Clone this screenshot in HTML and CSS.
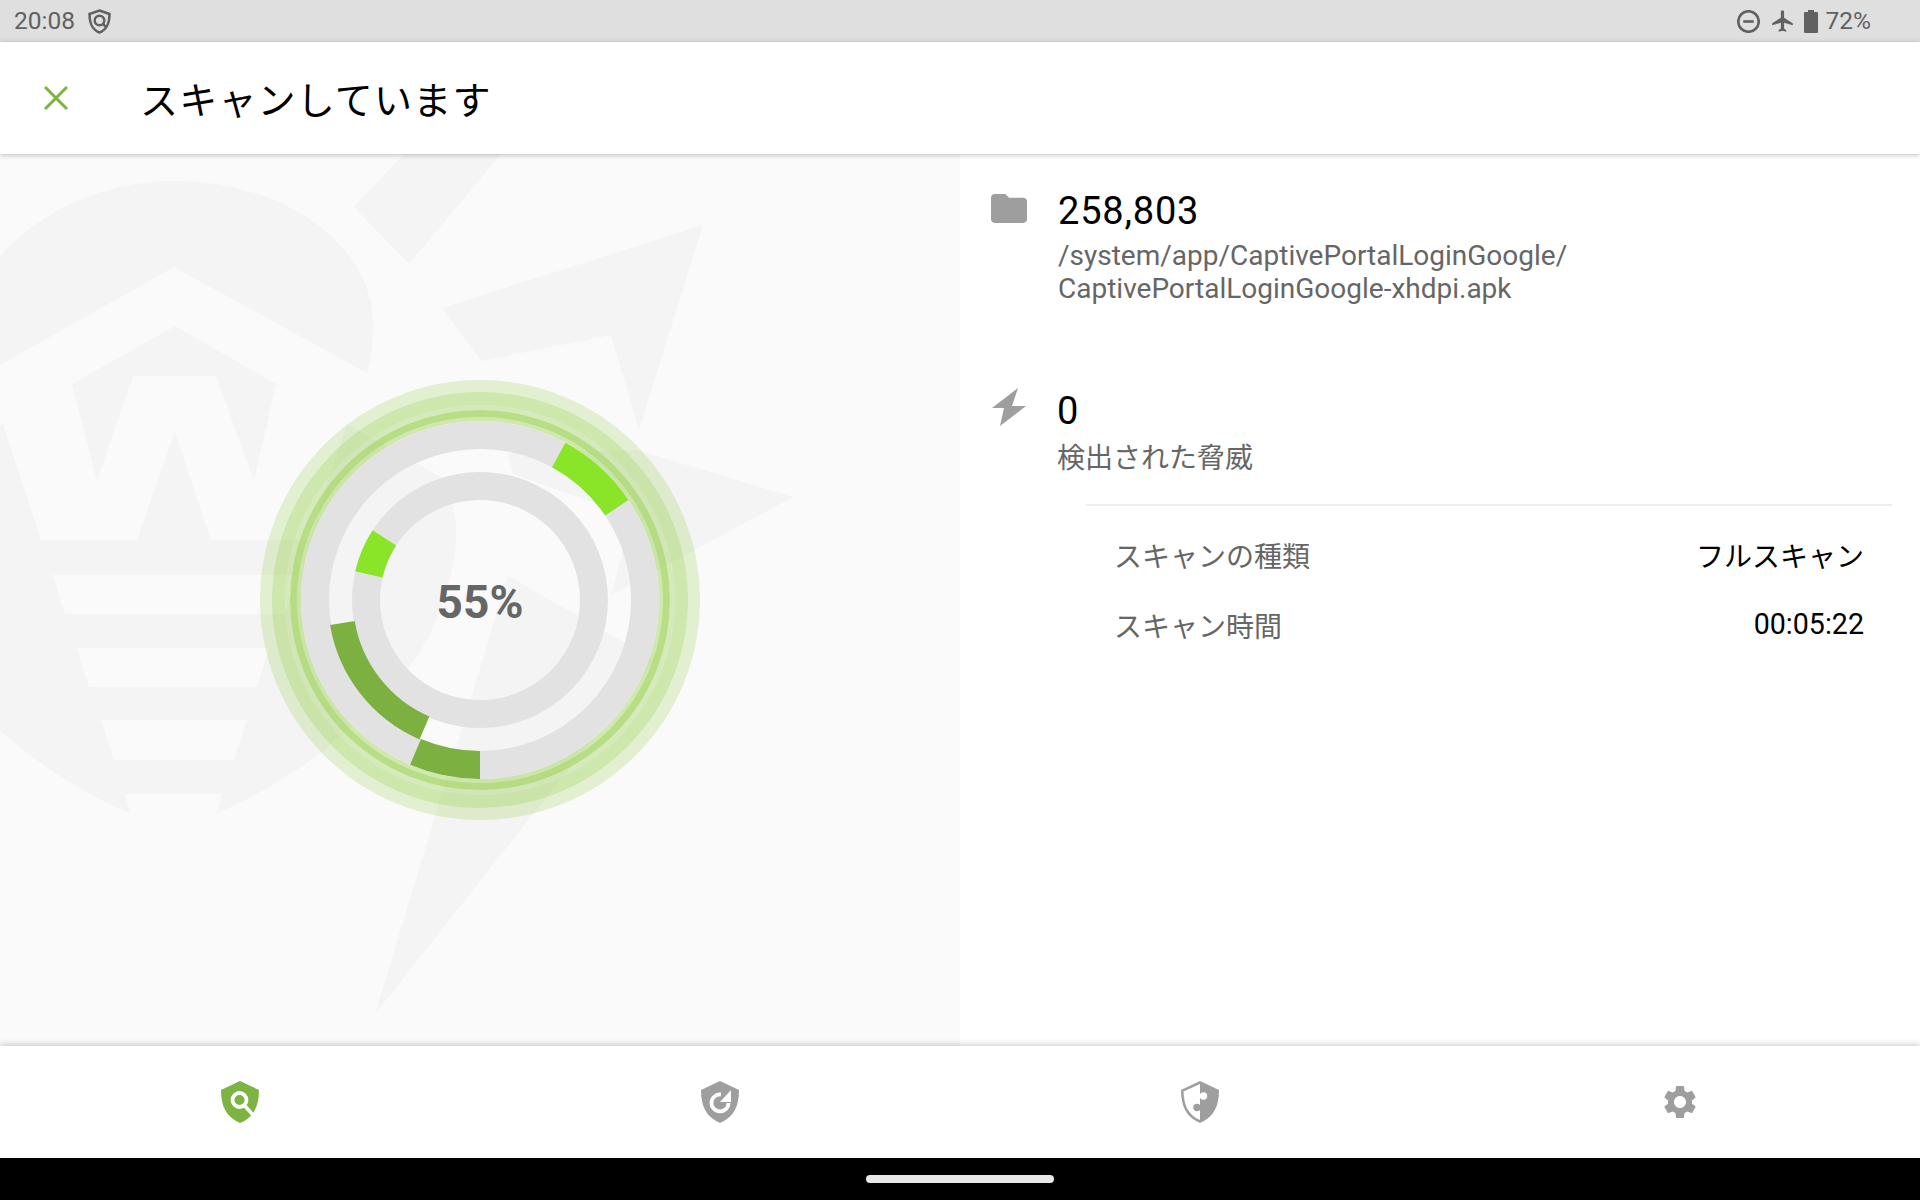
FILE: index.html
```html
<!DOCTYPE html>
<html lang="ja">
<head>
<meta charset="utf-8">
<title>スキャンしています</title>
<link rel="stylesheet" href="styles.css">
</head>
<body>
<div class="screen">
  <header class="status">
    <div class="status-side">
      <span class="status-text">20:08</span>
      <svg class="st-shield" viewBox="0 0 23 25"><path class="st-line" d="M11.5 1.5 21.5 5c0 8-1.500 15-10 18.500C3 20 1.500 13 1.500 5Z"/><circle class="st-line" cx="11.500" cy="11.500" r="4.800"/><path class="st-line" d="M15 15l3 3"/></svg>
    </div>
    <div class="status-side">
      <svg class="st-dnd" viewBox="0 0 22 22"><circle class="st-line" cx="11" cy="11" r="9.800"/><path class="st-line" d="M6 11h10"/></svg>
      <svg class="st-plane" viewBox="0 0 24 24"><path class="st-fill" d="M21 16v-2l-8-5V3.500c0-.83-.67-1.500-1.500-1.500S10 2.670 10 3.500V9l-8 5v2l8-2.500V19l-2 1.500V22l3.500-1 3.500 1v-1.500L13 19v-5.500l8 2.500z"/></svg>
      <svg class="st-batt" viewBox="0 0 14 23"><path class="st-fill" d="M4 0h6v2h3a1 1 0 0 1 1 1v19a1 1 0 0 1-1 1H1a1 1 0 0 1-1-1V3a1 1 0 0 1 1-1h3Z"/></svg>
      <span class="status-text">72%</span>
    </div>
  </header>

  <div class="appbar">
    <svg class="close" viewBox="0 0 24 24"><path d="M1 1 23 23M23 1 1 23"/></svg>
    <h1 class="title">スキャンしています</h1>
  </div>

  <main class="main">
    <section class="left">
      <svg class="mark" viewBox="0 154 960 892">
        <path d="M0 257C40 210 105 181 174 181C285 181 373 245 373 324C373 345 371 358 367 373L174 267L0 365Z"/>
        <path d="M72 384 175 326 276 384 254 481 216 376H133L97 481Z"/>
        <path fill-rule="evenodd" d="M0 426 3 424 41 540H137L175 431 211 540H309L347 424 441 477C452 500 458 520 456 540C452 590 432 640 408 668C380 705 340 735 321 753C290 775 250 800 217 813L222 794H125L130 813C85 795 40 765 0 731ZM53 575 65 614H285L297 575ZM77 648 89 687H257L269 648ZM101 720 114 760H234L247 720Z"/>
        <path d="M404 154H501L409 264 354 207Z"/>
        <path d="M442 308 703 225 639 430 611 335 481 361Z"/>
        <path d="M508 453 637 450 793 497 611 595 631 520 603 506 513 474Z"/>
        <path d="M508 576 655 660 375 1014Z"/>
      </svg>
      <div class="gauge">
        <svg class="gauge-art" viewBox="0 0 440 440">
          <g class="halo" transform="rotate(-90 220 220)">
            <circle class="h1" cx="220" cy="220" r="214"/>
            <circle class="h2" cx="220" cy="220" r="201.500"/>
            <circle class="h3" cx="220" cy="220" r="192.500"/>
            <circle class="h4" cx="220" cy="220" r="186.500"/>
            <circle class="h5" cx="220" cy="220" r="181"/>
          </g>
          <g transform="rotate(-90 220 220)">
            <circle class="track outer" cx="220" cy="220" r="165"/>
            <circle class="track inner" cx="220" cy="220" r="114"/>
            <circle class="seg bright outer" cx="220" cy="220" r="165" pathLength="360" stroke-dasharray="27.500 332.500" stroke-dashoffset="-28.500"/>
            <circle class="seg dark outer" cx="220" cy="220" r="165" pathLength="360" stroke-dasharray="23 337" stroke-dashoffset="-180"/>
            <circle class="seg dark gapring" cx="220" cy="220" r="139.500" pathLength="360" stroke-dasharray="57 303" stroke-dashoffset="-203.500"/>
            <circle class="seg bright inner" cx="220" cy="220" r="114" pathLength="360" stroke-dasharray="20 340" stroke-dashoffset="-283"/>
          </g>
        </svg>
        <div class="pct">55%</div>
      </div>
    </section>

    <section class="right">
      <div class="stat stat-files">
        <svg class="ic-folder" viewBox="2 4 20 16"><path d="M10 4H4c-1.100 0-2 .9-2 2v12c0 1.100.9 2 2 2h16c1.100 0 2-.9 2-2V8c0-1.100-.9-2-2-2h-8l-2-2z"/></svg>
        <div class="stat-body">
          <div class="num">258,803</div>
          <div class="sub">/system/app/CaptivePortalLoginGoogle/<br>CaptivePortalLoginGoogle-xhdpi.apk</div>
        </div>
      </div>
      <div class="stat stat-threats">
        <svg class="ic-bolt" viewBox="0 0 34 38"><path d="M26 0 0 20H12L8 38 34 18H20Z"/></svg>
        <div class="stat-body">
          <div class="num">0</div>
          <div class="sub sub-cjk">検出された脅威</div>
        </div>
      </div>
      <div class="divider"></div>
      <div class="details">
        <div class="row"><span class="key">スキャンの種類</span><span class="val">フルスキャン</span></div>
        <div class="row"><span class="key">スキャン時間</span><span class="val val-time">00:05:22</span></div>
      </div>
    </section>
  </main>

  <nav class="nav">
    <div class="tab">
      <svg class="tab-icon" viewBox="0 0 38 42"><path class="on" d="M19 0 38 9C38 25 33 36 19 42 5 36 0 25 0 9Z"/><circle class="cut" cx="18.500" cy="19" r="7"/><path class="cut cut-handle" d="M24 25 32 34"/></svg>
    </div>
    <div class="tab">
      <svg class="tab-icon" viewBox="0 0 38 42"><path class="off" d="M19 0 38 9C38 25 33 36 19 42 5 36 0 25 0 9Z"/><path class="cut" d="M20 13.500A8.500 8.500 0 1 0 27.500 22"/><path class="wh" d="M30 9V21H19Z"/></svg>
    </div>
    <div class="tab">
      <svg class="tab-icon" viewBox="0 0 38 42"><path class="off" d="M19 0 38 9C38 25 33 36 19 42Z"/><path class="off" d="M19 0 0 9C0 25 5 36 19 42V39C7 34 3 24 2.500 10.500L19 3Z"/><circle class="wh" cx="22.500" cy="15" r="3.700"/><circle class="off" cx="16" cy="26.500" r="3.700"/></svg>
    </div>
    <div class="tab">
      <svg class="tab-gear" viewBox="0 0 24 24"><path class="off" d="M19.140 12.940c.04-.3.06-.61.06-.94 0-.32-.02-.64-.07-.94l2.030-1.580c.18-.14.23-.41.12-.61l-1.920-3.320c-.12-.22-.37-.29-.59-.22l-2.390.96c-.5-.38-1.030-.7-1.620-.94l-.36-2.540c-.04-.24-.24-.41-.48-.41h-3.840c-.24 0-.43.17-.47.41l-.36 2.540c-.59.24-1.130.57-1.620.94l-2.390-.96c-.22-.08-.47 0-.59.22L2.740 8.870c-.12.21-.08.47.12.61l2.030 1.580c-.05.3-.09.63-.09.94s.02.64.07.94l-2.030 1.580c-.18.14-.23.41-.12.61l1.920 3.320c.12.22.37.29.59.22l2.390-.96c.5.38 1.030.7 1.620.94l.36 2.540c.05.24.24.41.48.41h3.840c.24 0 .44-.17.47-.41l.36-2.540c.59-.24 1.130-.56 1.620-.94l2.390.96c.22.08.47 0 .59-.22l1.920-3.320c.12-.22.07-.47-.12-.61l-2.010-1.580zM12 15.600c-1.980 0-3.600-1.620-3.600-3.600s1.620-3.600 3.600-3.600 3.600 1.620 3.600 3.600-1.620 3.600-3.600 3.600z"/></svg>
    </div>
  </nav>

  <footer class="sysbar"><div class="pill"></div></footer>
</div>
</body>
</html>
```
FILE: styles.css
```css
* { box-sizing: border-box; }
html, body { margin: 0; padding: 0; }
body { font-family: Roboto, "Noto Sans CJK JP", sans-serif; background: #fff; }
.screen { width: 1920px; height: 1200px; display: flex; flex-direction: column; overflow: hidden; }

.status { height: 42px; flex: none; background: #dfdfdf; display: flex; justify-content: space-between; align-items: center; padding: 0 49px 0 14px; }
.status-side { display: flex; align-items: center; }
.status-text { font-size: 24.5px; line-height: 42px; color: #616161; }
.st-line { fill: none; stroke: #616161; stroke-width: 2.5; }
.st-fill { fill: #616161; }
.st-shield { width: 23px; height: 25px; margin-left: 13px; }
.st-dnd { width: 23px; height: 23px; }
.st-plane { width: 26px; height: 26px; margin-left: 10px; }
.st-batt { width: 14px; height: 23px; margin: 0 8px 0 8px; }

.appbar { height: 112px; flex: none; background: #fff; display: flex; align-items: center; padding-left: 44px; box-shadow: 0 1px 5px rgba(0,0,0,.25); position: relative; z-index: 2; }
.close { width: 24px; height: 24px; flex: none; }
.close path { fill: none; stroke: #7cb342; stroke-width: 3; }
.title { margin: 0 0 0 72px; font-size: 38px; letter-spacing: 1.2px; font-weight: 400; color: #000; line-height: 50px; font-family: "Noto Sans CJK JP", sans-serif; }

.main { flex: 1; display: grid; grid-template-columns: 960px 960px; min-height: 0; }
.left { position: relative; background: #fafafa; overflow: hidden; display: flex; align-items: center; justify-content: center; }
.mark { position: absolute; left: 0; top: 0; width: 960px; height: 892px; fill: #f4f4f4; }
.gauge { position: relative; width: 440px; height: 440px; }
.gauge-art { display: block; width: 440px; height: 440px; }
.pct { position: absolute; inset: 0; display: flex; align-items: center; justify-content: center; font-size: 46px; font-weight: 700; color: #666; padding-top: 3px; }

.halo circle { fill: none; stroke: #8acb37; }
.h1 { stroke-width: 12; stroke-opacity: .21; }
.h2 { stroke-width: 13; stroke-opacity: .4; }
.h3 { stroke-width: 5; stroke-opacity: .32; }
.h4 { stroke-width: 7; stroke-opacity: .6; }
.h5 { stroke-width: 4; stroke-opacity: .39; }
.track { fill: none; stroke: #e2e2e2; }
.seg { fill: none; }
.outer { stroke-width: 28; }
.inner { stroke-width: 28; }
.gapring { stroke-width: 25; }
.bright { stroke: #8ae428; }
.dark { stroke: #7cb142; }

.right { background: #fff; }
.stat { display: flex; align-items: flex-start; padding-left: 31px; }
.stat-files { margin-top: 40px; }
.stat-threats { margin-top: 87px; }
.ic-folder { width: 36px; height: 29px; flex: none; fill: #9e9e9e; }
.ic-bolt { width: 34px; height: 38px; flex: none; fill: #9e9e9e; margin-top: -4px; margin-left: 1px; }
.stat-body { margin: -5px 0 0 31px; }
.stat-threats .stat-body { margin: -3px 0 0 31px; }
.num { font-size: 38px; letter-spacing: .8px; font-weight: 400; line-height: 44px; color: #000; }
.sub { font-size: 28px; line-height: 33px; color: #666; margin-top: 6px; }
.sub-cjk { line-height: 40px; margin-top: 6px; }
.divider { height: 2px; background: #eee; margin: 25px 28px 0 126px; }
.details { padding: 0 56px 0 154px; margin-top: 14px; }
.row { display: flex; justify-content: space-between; align-items: center; height: 70px; }
.key { font-size: 28px; color: #666; }
.val { font-size: 28px; color: #000; }
.val-time { font-size: 28.6px; margin-top: -2px; }

.nav { height: 112px; flex: none; background: #fff; display: grid; grid-template-columns: repeat(4, 1fr); align-items: center; justify-items: center; box-shadow: 0 -2px 6px rgba(0,0,0,.18); position: relative; z-index: 2; }
.tab { display: flex; align-items: center; justify-content: center; }
.tab-icon { width: 38px; height: 42px; }
.tab-gear { width: 40px; height: 40px; }
.on { fill: #7cb342; }
.off { fill: #9e9e9e; }
.cut { fill: none; stroke: #fff; stroke-width: 3.8; }
.cut-handle { stroke-width: 3.5; }
.wh { fill: #fff; }

.sysbar { height: 42px; flex: none; background: #000; display: flex; justify-content: center; padding-top: 17px; position: relative; z-index: 3; }
.pill { width: 188px; height: 8px; border-radius: 4px; background: #e8e8e8; }
```
